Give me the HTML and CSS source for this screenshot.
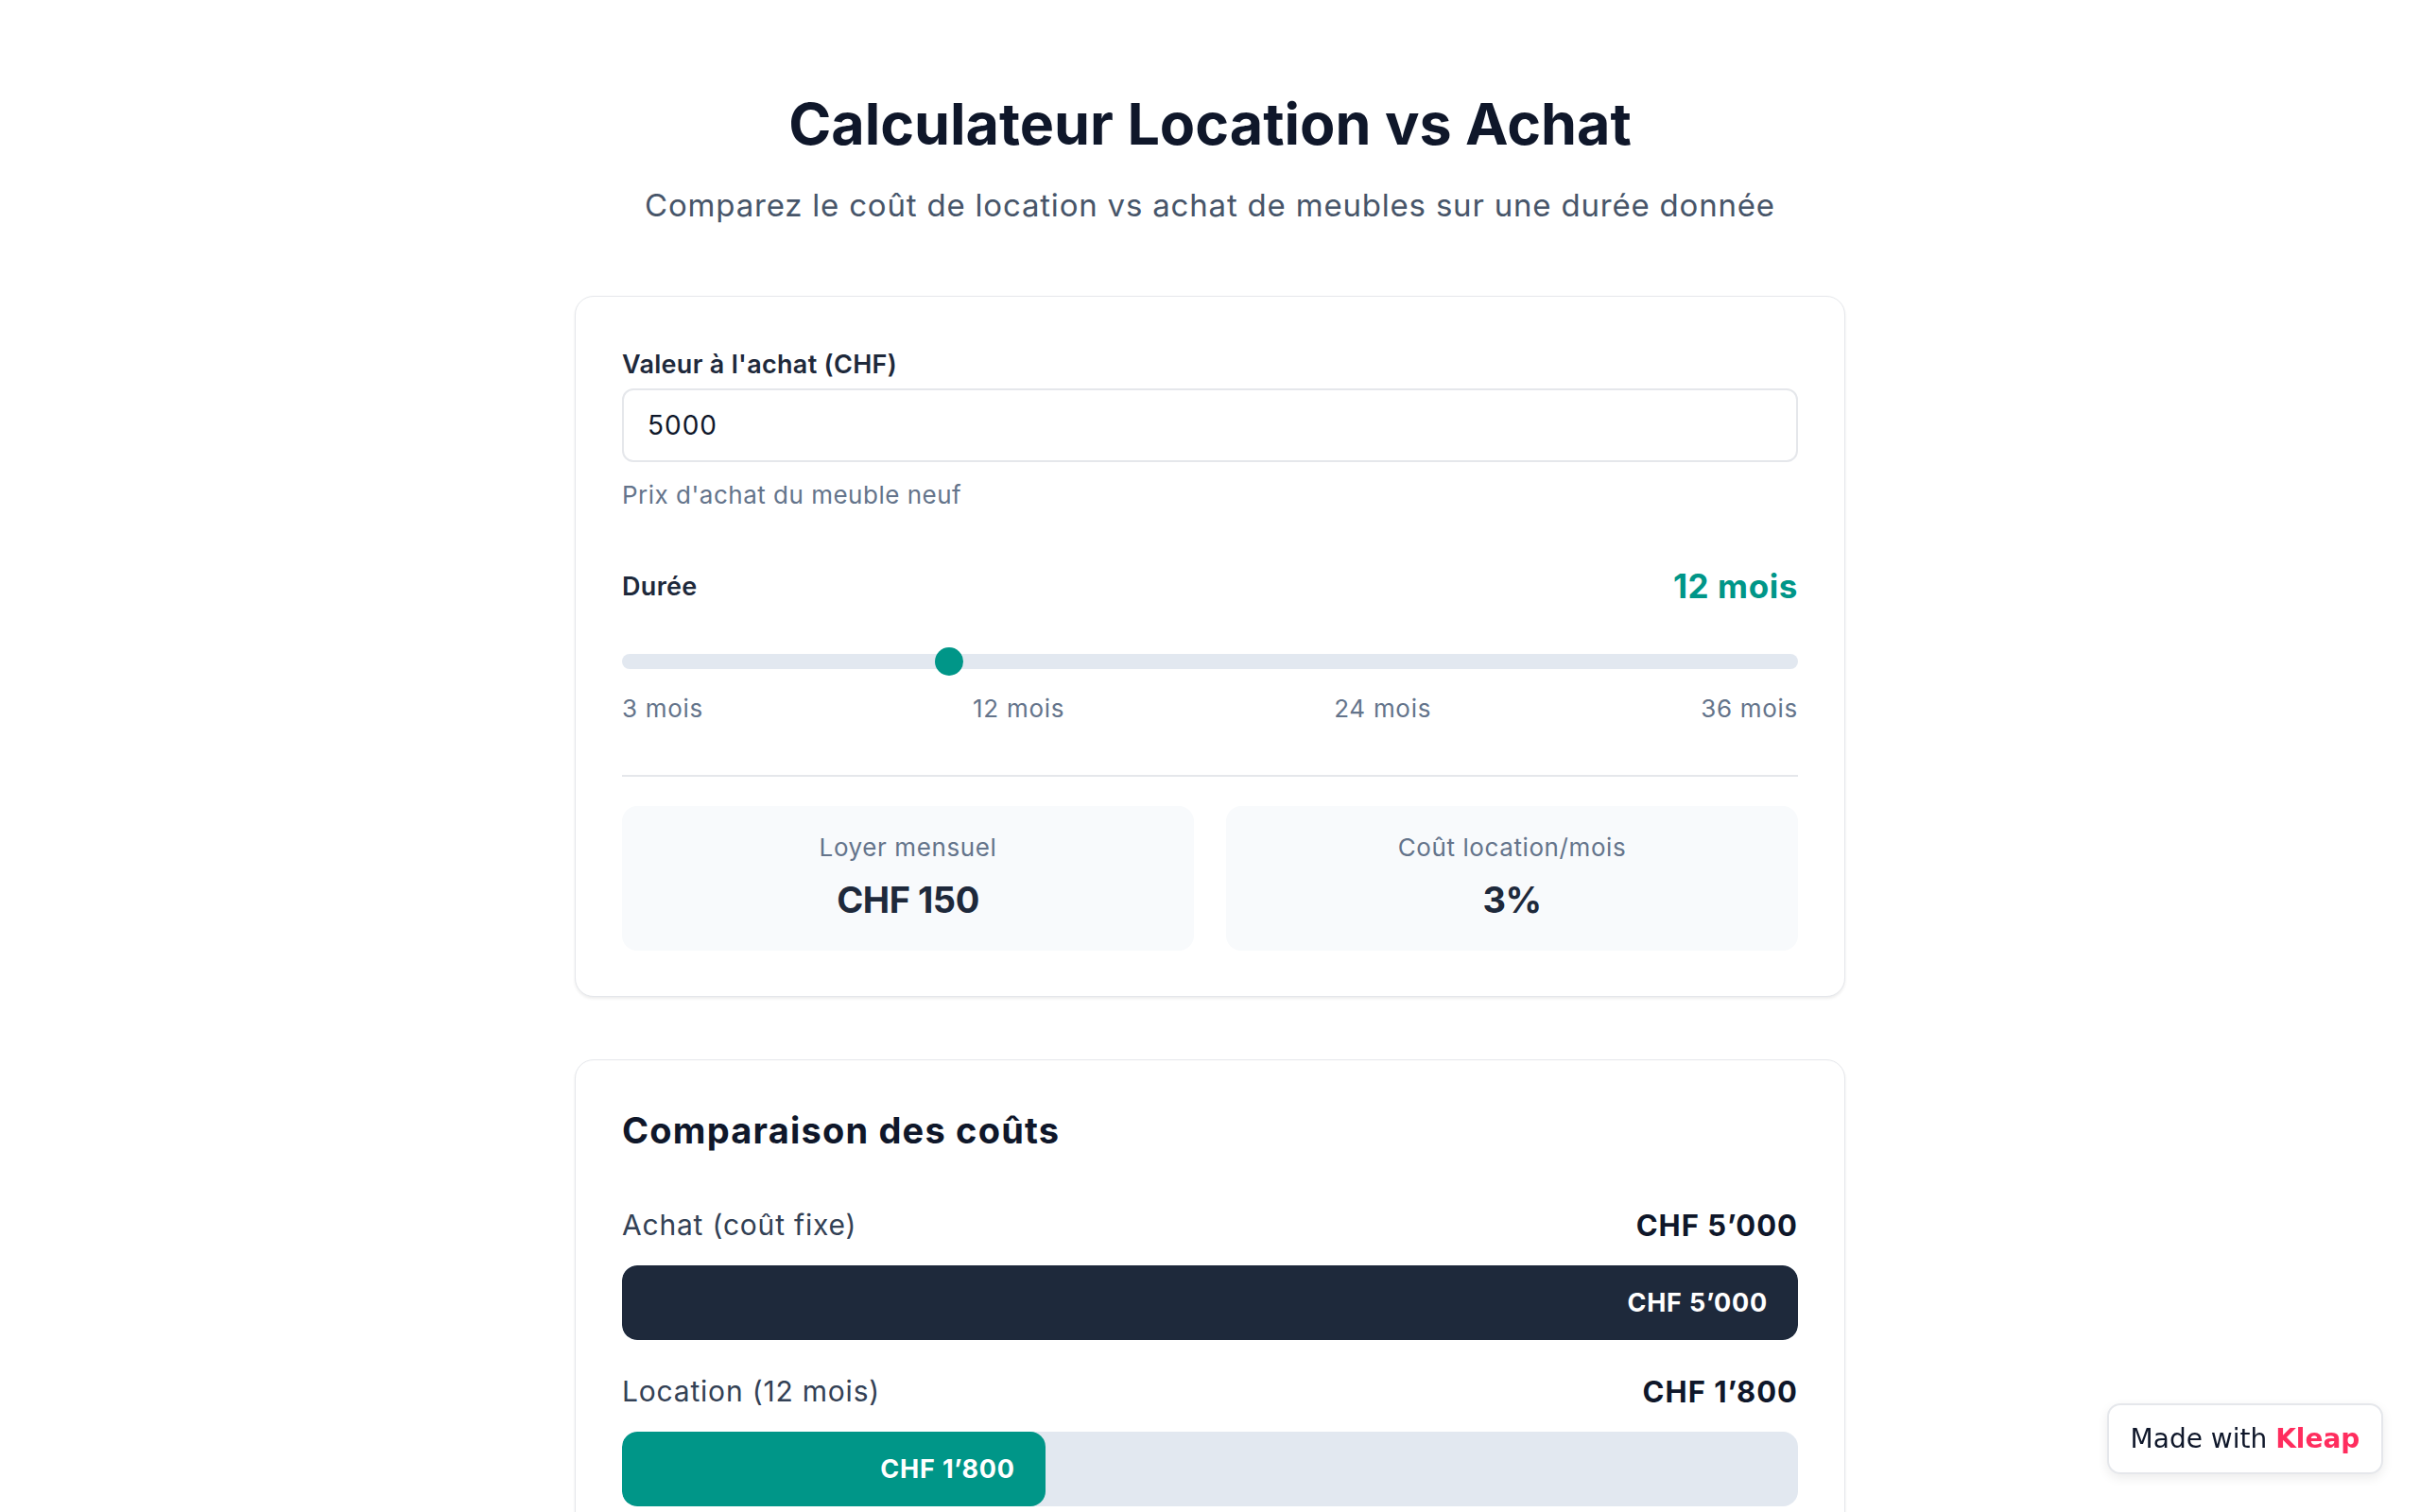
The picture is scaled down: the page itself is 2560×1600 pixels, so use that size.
FILE: index.html
```
<!DOCTYPE html>
<html>
	<head>
		<meta charset="UTF-8">
		<title>Calculateur Location vs Achat</title>
		<link rel="stylesheet" href="styles.css">
	</head>
	<body>
		<div class="page">
			<div class="head">
				<h1>Calculateur Location vs Achat</h1>
				<p class="sub">Comparez le coût de location vs achat de meubles sur une durée donnée</p>
			</div>

			<!-- paramètres -->
			<div class="card card-form">
				<label class="label" for="prix">Valeur à l'achat (CHF)</label>
				<input class="field" id="prix" type="text" value="5000">
				<p class="help">Prix d'achat du meuble neuf</p>

				<div class="duree">
					<div class="duree-top">
						<span class="label">Durée</span>
						<span class="duree-val">12 mois</span>
					</div>
					<input class="range" type="range" min="3" max="36" value="12">
					<div class="ticks">
						<span>3 mois</span>
						<span>12 mois</span>
						<span>24 mois</span>
						<span>36 mois</span>
					</div>
				</div>

				<div class="stats">
					<div class="stat">
						<p class="stat-label">Loyer mensuel</p>
						<p class="stat-value">CHF 150</p>
					</div>
					<div class="stat">
						<p class="stat-label">Coût location/mois</p>
						<p class="stat-value">3%</p>
					</div>
				</div>
			</div>

			<!-- comparaison -->
			<div class="card card-compare">
				<h2>Comparaison des coûts</h2>
				<div class="item">
					<div class="item-top">
						<span>Achat (coût fixe)</span>
						<b>CHF 5’000</b>
					</div>
					<div class="bar">
						<div class="fill fill-dark" style="width: 100%">CHF 5’000</div>
					</div>
				</div>
				<div class="item">
					<div class="item-top">
						<span>Location (12 mois)</span>
						<b>CHF 1’800</b>
					</div>
					<div class="bar">
						<div class="fill fill-teal" style="width: 36%">CHF 1’800</div>
					</div>
				</div>
			</div>
		</div>

		<a class="badge" href="#">Made with <b>Kleap</b></a>
	</body>
</html>
```

FILE: styles.css
```
*{
	margin: 0;
	padding: 0;
	box-sizing: border-box;
}
body{
	font-family: Inter, "Noto Sans", sans-serif;
	color: #0f172a;
	background-color: #fff;
}
.page{
	width: 1344px;
	margin: 0 auto;
	padding: 95px 0 80px;
}
.head{
	text-align: center;
	margin-bottom: 73px;
}
.head h1{
	font-size: 61px;
	line-height: 72px;
	font-weight: 700;
	color: #0f172a;
}
.head .sub{
	margin-top: 27px;
	font-size: 33px;
	line-height: 46px;
	letter-spacing: 0.8px;
	color: #475569;
}
.card{
	border: 1px solid #e5e7eb;
	border-radius: 20px;
	background-color: #fff;
	box-shadow: 0 2px 3px rgba(0,0,0,0.07);
}
.card-form{
	padding: 52px 49px 48px;
}
.label{
	display: block;
	font-size: 27px;
	line-height: 40px;
	font-weight: 600;
	letter-spacing: 0.3px;
	color: #1e293b;
	margin-bottom: 5px;
}
.field{
	display: block;
	width: 100%;
	height: 78px;
	border: 2px solid #e5e7eb;
	border-radius: 12px;
	padding: 0 25px;
	font-family: inherit;
	font-size: 28px;
	letter-spacing: 1px;
	color: #0f172a;
	outline: none;
}
.help{
	margin-top: 15px;
	font-size: 26px;
	line-height: 39px;
	letter-spacing: 0.5px;
	color: #64748b;
}
.duree{
	margin-top: 52px;
}
.duree-top{
	display: flex;
	justify-content: space-between;
	align-items: center;
}
.duree-top .label{
	margin-bottom: 0;
}
.duree-val{
	font-size: 35px;
	line-height: 51px;
	font-weight: 700;
	letter-spacing: 0.6px;
	color: #009688;
}
.range{
	-webkit-appearance: none;
	appearance: none;
	display: block;
	width: 100%;
	height: 30px;
	margin-top: 39px;
	background: transparent;
}
.range::-webkit-slider-runnable-track{
	height: 16px;
	border-radius: 8px;
	background-color: #e2e8f0;
}
.range::-webkit-slider-thumb{
	-webkit-appearance: none;
	width: 30px;
	height: 30px;
	margin-top: -7px;
	border-radius: 50%;
	background-color: #009688;
	border: none;
}
.ticks{
	display: flex;
	justify-content: space-between;
	margin-top: 15px;
	font-size: 26px;
	line-height: 39px;
	letter-spacing: 0.7px;
	color: #64748b;
}
.stats{
	margin-top: 51px;
	padding-top: 31px;
	border-top: 2px solid #e5e7eb;
	display: grid;
	grid-template-columns: 1fr 1fr;
	gap: 34px;
}
.stat{
	background-color: #f8fafc;
	border-radius: 16px;
	padding: 24px 24px 28px;
	text-align: center;
}
.stat-label{
	font-size: 26px;
	line-height: 39px;
	letter-spacing: 0.6px;
	color: #64748b;
}
.stat-value{
	margin-top: 10px;
	font-size: 38px;
	line-height: 52px;
	font-weight: 700;
	letter-spacing: -0.5px;
	color: #1e293b;
}
.card-compare{
	margin-top: 66px;
	padding: 50px 49px 60px;
}
.card-compare h2{
	font-size: 38px;
	line-height: 48px;
	font-weight: 700;
	letter-spacing: 1.2px;
	color: #0f172a;
	margin-bottom: 54px;
}
.item + .item{
	margin-top: 32px;
}
.item-top{
	display: flex;
	justify-content: space-between;
	align-items: center;
	font-size: 30px;
	line-height: 45px;
	margin-bottom: 20px;
}
.item-top span{
	letter-spacing: 0.8px;
	color: #334155;
}
.item-top b{
	font-size: 31px;
	font-weight: 700;
	letter-spacing: 1px;
	color: #0f172a;
}
.bar{
	height: 79px;
	border-radius: 16px;
	background-color: #e2e8f0;
	overflow: hidden;
}
.fill{
	height: 100%;
	border-radius: 16px;
	display: flex;
	align-items: center;
	justify-content: flex-end;
	padding-right: 32px;
	font-size: 27px;
	font-weight: 700;
	letter-spacing: 0.8px;
	color: #fff;
}
.fill-dark{
	background-color: #1e293b;
}
.fill-teal{
	background-color: #009688;
}
.badge{
	position: fixed;
	right: 39px;
	bottom: 40px;
	width: 292px;
	height: 75px;
	display: flex;
	align-items: center;
	justify-content: center;
	border: 2px solid #e5e7eb;
	border-radius: 14px;
	background-color: #fff;
	box-shadow: 0 4px 12px rgba(0,0,0,0.08);
	font-family: "DejaVu Sans", sans-serif;
	font-size: 28px;
	color: #0f172a;
	text-decoration: none;
	white-space: pre;
}
.badge b{
	color: #ff2d5e;
	font-weight: 700;
}
```
